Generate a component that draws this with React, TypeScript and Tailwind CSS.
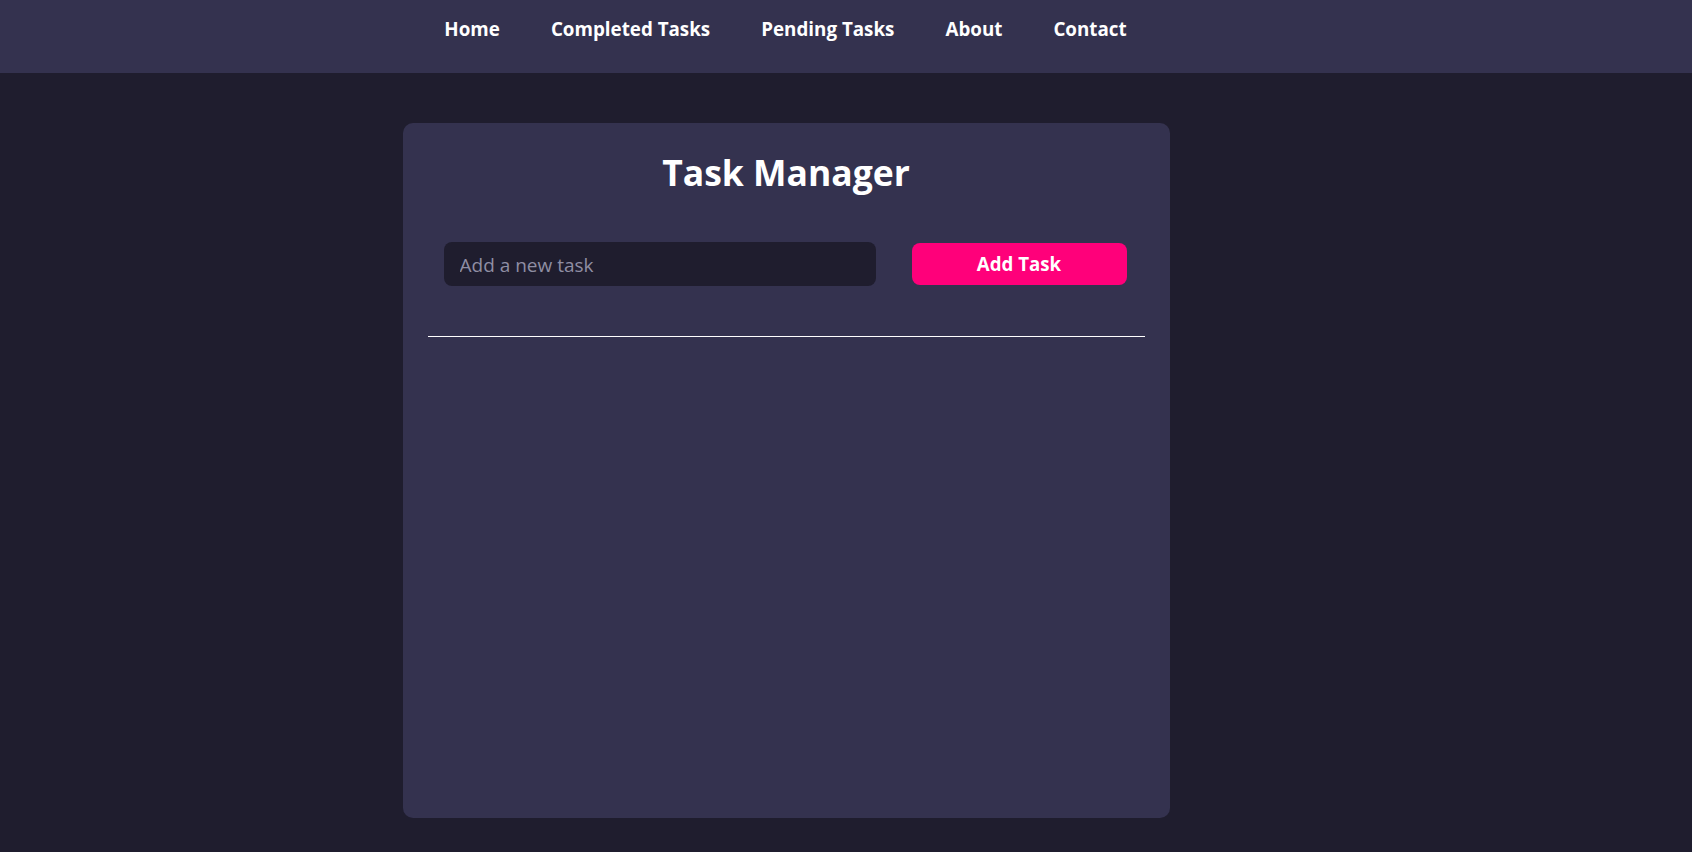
const navLinks = ["Home", "Completed Tasks", "Pending Tasks", "About", "Contact"];

const App = () => {
  return (
    <div className="min-h-screen w-full bg-[#1f1d2e] text-white font-['Open_Sans',sans-serif]">
      {/* Navbar */}
      <nav className="h-[73px] bg-[#34324f] flex justify-center pr-[121px]">
        <ul className="flex gap-[51px] pt-[16px]">
          {navLinks.map((link) => (
            <li key={link}>
              <a href="#" className="text-[18.8px] font-bold leading-[27px] text-white">
                {link}
              </a>
            </li>
          ))}
        </ul>
      </nav>

      {/* Card */}
      <div className="flex justify-center pr-[120px] pt-[50px]">
        <div className="w-[767px] h-[695px] bg-[#34324f] rounded-[10px] px-[25px] pt-[25px]">
          <h1 className="text-center text-[35.5px] font-bold leading-[48px]">Task Manager</h1>

          <form className="mt-[46px] pl-[16px] pr-[18px] flex items-center justify-between">
            <input
              type="text"
              placeholder="Add a new task"
              className="w-[432px] h-[44px] rounded-[8px] bg-[#1f1d2e] px-[16px] pt-[2px] text-[19px] text-white placeholder:text-[#8f8ea3] outline-none"
            />
            <button
              type="button"
              className="w-[215px] h-[42px] rounded-[8px] bg-[#ff007a] text-[18.7px] font-bold text-white"
            >
              Add Task
            </button>
          </form>

          <hr className="mt-[50px] border-0 border-t border-white" />
        </div>
      </div>
    </div>
  );
};

export default App;
